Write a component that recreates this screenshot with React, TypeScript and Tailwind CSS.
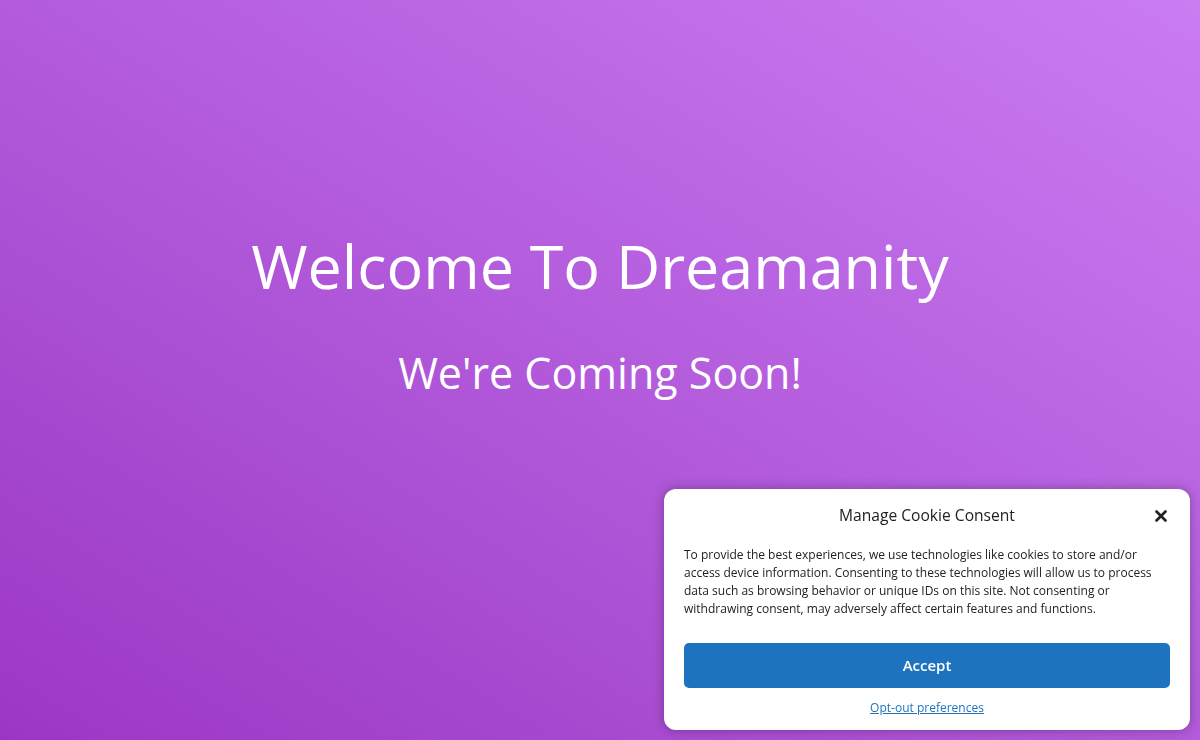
import { X } from "lucide-react";

function CookieBanner() {
  return (
    <div className="fixed bottom-[10px] right-[10px] w-[526px] rounded-xl bg-white px-5 pb-3 pt-4 shadow-[0_0_12px_rgba(0,0,0,0.3)]">
      <div className="relative flex items-center justify-center">
        <h3 className="text-[15.6px] leading-5 text-[#222]">Manage Cookie Consent</h3>
        <button type="button" className="absolute right-0 top-0.5 text-[#222]">
          <X size={18} strokeWidth={3.5} />
        </button>
      </div>
      <p className="mt-[21px] text-[12px] leading-[18px] text-[#222]">
        To provide the best experiences, we use technologies like cookies to store and/or access
        device information. Consenting to these technologies will allow us to process data such as
        browsing behavior or unique IDs on this site. Not consenting or withdrawing consent, may
        adversely affect certain features and functions.
      </p>
      <button
        type="button"
        className="mt-[25px] h-[45px] w-full rounded-[5px] bg-[#1e73be] text-[15px] font-semibold text-white"
      >
        Accept
      </button>
      <div className="mt-[6px] text-center">
        <a href="#" className="text-[12px] text-[#1e73be] underline">
          Opt-out preferences
        </a>
      </div>
    </div>
  );
}

export default function App() {
  return (
    <div
      className="flex h-[740px] w-full flex-col items-center bg-gradient-to-tr from-[#9b36c4] to-[#ca7cf3] text-white"
      style={{ fontFamily: '"Open Sans", "Noto Sans", sans-serif' }}
    >
      <h1 className="mt-[226px] text-[61px] leading-[80px]">Welcome To Dreamanity</h1>
      <h2 className="mt-[37px] text-[43px] leading-[60px]">We're Coming Soon!</h2>
      <CookieBanner />
    </div>
  );
}
